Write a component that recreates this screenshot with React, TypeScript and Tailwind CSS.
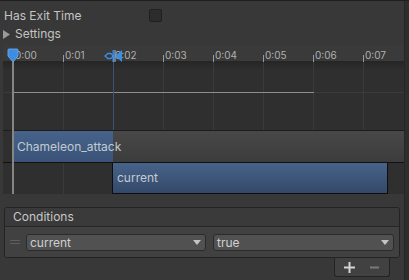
const ticks = [0, 1, 2, 3, 4, 5, 6, 7];

const TimeRuler = () => (
  <>
    {ticks.map((t) => (
      <div key={t} className="absolute top-0 bottom-0" style={{ left: 10 + t * 50 }}>
        <div className="absolute top-[17px] bottom-0 left-0 w-px bg-[#3a3a3a]" />
        <div className="absolute top-[10px] left-0 h-[7px] w-px bg-[#9a9a9a]" />
        <div className="absolute top-[4px] left-[2px] text-[10px] leading-[12px] text-[#b0b0b0]">
          0:0{t}
        </div>
      </div>
    ))}
  </>
);

const Timeline = () => (
  <div className="relative ml-[3px] mt-[2px] h-[149px] w-[401px] bg-[#2f2f2f]">
    {/* header strip */}
    <div className="absolute left-0 right-0 top-0 h-[17px] bg-[#3a3a3a] border-b border-[#262626]" />
    <div className="absolute left-0 right-0 top-[17px] h-[8px] bg-gradient-to-b from-[#262626] to-transparent" />
    <TimeRuler />
    {/* horizontal grid + curve */}
    <div className="absolute left-0 right-0 top-[47px] h-px bg-[#3a3a3a]" />
    <div className="absolute left-[10px] w-[301px] top-[47px] h-px bg-[#8e8e8e]" />
    {/* transition marker line */}
    <div className="absolute left-[110px] top-[17px] h-[68px] w-px bg-[#3c5473]" />

    <div className="relative flex h-full flex-col pt-[85px]">
      <div className="h-px bg-[#1c1c1c]" />
      <div className="flex h-[31px]">
        <div className="w-[10px]" />
        <div className="relative w-[100px] bg-gradient-to-b from-[#47638a] to-[#3a5377]">
          <span className="absolute left-[4px] top-[8px] whitespace-nowrap text-[12px] leading-[16px] text-[#c3cad3] z-10">
            Chameleon_attack
          </span>
        </div>
        <div className="flex-1 bg-gradient-to-b from-[#484848] to-[#3c3c3c]" />
      </div>
      <div className="h-px bg-[#111111]" />
      <div className="flex h-[31px]">
        <div className="w-[109px]" />
        <div className="w-[276px] border border-[#0e0e0e] border-t-0 bg-gradient-to-b from-[#47638a] to-[#34496a] px-[4px] pt-[7px] text-[12px] leading-[16px] text-[#c3cad3]">
          current
        </div>
      </div>
    </div>

    {/* start line */}
    <div className="absolute left-[9px] top-[17px] bottom-0 w-[2px] bg-[#858585]" />
    {/* playhead marker */}
    <svg className="absolute left-[4px] top-[3px]" width="12" height="15" viewBox="0 0 12 15">
      <path d="M1 2 Q1 1 2 1 H10 Q11 1 11 2 V8 L6 14 L1 8 Z" fill="#3d8de2" stroke="#6fb0f5" strokeWidth="0.8" />
    </svg>
    {/* transition markers */}
    <svg className="absolute left-[101px] top-[4px]" width="20" height="13" viewBox="0 0 20 13">
      <path d="M1 7 L4 4.5 H6 A2.5 2.5 0 1 1 6 9.5 H4 Z" fill="none" stroke="#3d8de2" strokeWidth="1.3" />
      <rect x="8.5" y="1" width="1.3" height="12" fill="#3d8de2" />
      <path d="M18 1 V13 L11 7 Z" fill="#3d8de2" />
      <rect x="10.5" y="1" width="1" height="12" fill="#8fc0f0" />
    </svg>
  </div>
);

const Dropdown = ({ label, width }: { label: string; width: string }) => (
  <div className={`${width} flex h-[17px] items-center justify-between rounded-[3px] border border-[#2b2b2b] bg-[#515151] pl-[3px] pr-[4px] text-[12px] text-[#d0d0d0]`}>
    <span className="leading-[15px]">{label}</span>
    <svg width="8" height="5" viewBox="0 0 8 5">
      <path d="M0 0 H8 L4 5 Z" fill="#c4c4c4" />
    </svg>
  </div>
);

export default function App() {
  return (
    <div
      className="flex h-[280px] w-[409px] border-t border-[#1f1f1f] bg-[#383838] text-[#c4c4c4]"
      style={{ fontFamily: "Inter, 'Noto Sans', sans-serif" }}
    >
      <div className="flex w-[404px] flex-col">
        <div className="flex h-[19px] items-center pt-[5px] box-content">
          <span className="ml-[4px] w-[145px] text-[12px] leading-[16px]">Has Exit Time</span>
          <div className="h-[13px] w-[13px] rounded-[2px] border border-[#202020] bg-[#2c2c2c]" />
        </div>
        <div className="flex h-[18px] items-center">
          <svg className="ml-[3px] mr-[5px]" width="7" height="9" viewBox="0 0 7 9">
            <path d="M0 0 L7 4.5 L0 9 Z" fill="#9a9a9a" />
          </svg>
          <span className="text-[12px] leading-[16px]">Settings</span>
        </div>
        <Timeline />

        <div className="mx-[4px] mt-[13px] flex flex-col">
          <div className="rounded-[3px] border border-[#232323] overflow-hidden">
            <div className="flex h-[19px] items-center border-b border-[#262626] bg-[#3a3a3a] pl-[8px] text-[12px] text-[#c8c8c8]">
              Conditions
            </div>
            <div className="flex h-[30px] items-center bg-[#414141]">
              <div className="ml-[5px] mr-[6px] flex w-[10px] flex-col gap-[2px]">
                <div className="h-px bg-[#5e5e5e]" />
                <div className="h-px bg-[#5e5e5e]" />
              </div>
              <Dropdown label="current" width="w-[180px]" />
              <div className="w-[7px]" />
              <Dropdown label="true" width="w-[181px]" />
            </div>
          </div>
          <div className="mr-[10px] flex h-[19px] w-[56px] items-center self-end rounded-b-[3px] border border-t-0 border-[#232323] bg-[#414141]">
            <svg className="ml-[9px]" width="11" height="11" viewBox="0 0 11 11">
              <rect x="0" y="4.5" width="11" height="2" fill="#d4d4d4" />
              <rect x="4.5" y="0" width="2" height="11" fill="#d4d4d4" />
            </svg>
            <svg className="ml-[15px]" width="9" height="11" viewBox="0 0 9 11">
              <rect x="0" y="4.5" width="9" height="2" fill="#7a7a7a" />
            </svg>
          </div>
        </div>
      </div>
      <div className="flex-1 border-l border-[#262626] bg-[#2e2e2e]" />
    </div>
  );
}
